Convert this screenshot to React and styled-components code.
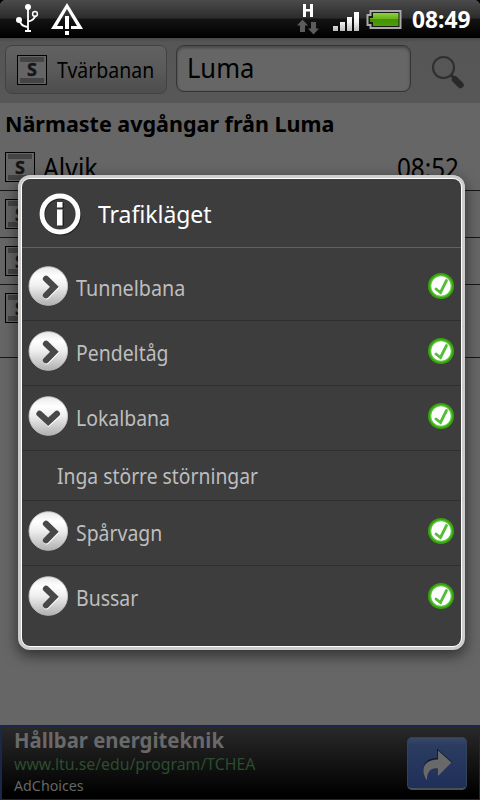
import React from 'react';
import styled, { createGlobalStyle } from 'styled-components';

const Global = createGlobalStyle`
  * { box-sizing: border-box; }
  body { margin: 0; background: #666; font-family: "Noto Sans", "Open Sans", sans-serif; }
`;

const Screen = styled.div`
  position: relative;
  width: 480px;
  height: 800px;
  overflow: hidden;
  display: flex;
  flex-direction: column;
  background: #666;
  color: #000;
`;

const Text = styled.span`
  display: block;
  flex: none;
  white-space: nowrap;
  font-size: ${p => p.$size}px;
  line-height: ${p => p.$line || 30}px;
  font-weight: ${p => (p.$bold ? 700 : 400)};
  color: ${p => p.$color || '#000'};
  transform: scaleX(${p => p.$stretch || 1});
  transform-origin: ${p => p.$origin || 'left'} center;
`;

const StatusBar = styled.header`
  height: 38px;
  flex: none;
  display: flex;
  justify-content: space-between;
  border-radius: 6px 6px 0 0;
  background: linear-gradient(#4b4b4b 0, #2c2c2c 18px, #141414 19px, #000 37px);
  box-shadow: 0 -6px 0 6px #000;
  z-index: 1;
`;

const StatusGroup = styled.div`
  display: flex;
  height: 38px;
`;

const Clock = styled.div`
  width: 74px;
  padding: 4px 0 0 6px;
`;

const Toolbar = styled.div`
  height: 65px;
  flex: none;
  display: flex;
  padding: 7px 5px 0;
  background: linear-gradient(#484848 0, #565656 4px, #575757 100%);
`;

const LineButton = styled.button`
  width: 162px;
  height: 49px;
  display: flex;
  align-items: center;
  padding: 0 0 0 11px;
  gap: 10px;
  border: 1px solid #424242;
  border-radius: 7px;
  background: linear-gradient(#616161, #5a5a5a 50%, #4d4d4d);
  font-family: inherit;
`;

const LineName = styled.span`
  padding-bottom: 2px;
`;

const StationField = styled.div`
  width: 235px;
  height: 47px;
  margin-left: 9px;
  padding: 3px 0 0 10px;
  border: 1px solid #353535;
  border-radius: 8px;
  background: #666;
  box-shadow: inset 0 2px 3px #484848, inset 0 0 1px #444;
`;

const SearchButton = styled.div`
  margin: 9px 0 0 20px;
  width: 36px;
  height: 36px;
`;

const Heading = styled.div`
  height: 41px;
  flex: none;
  padding: 6px 0 0 5px;
`;

const Departure = styled.div`
  height: ${p => p.$height}px;
  flex: none;
  display: flex;
  align-items: flex-start;
  gap: 8px;
  padding: 8px 21px 0 5px;
  border-bottom: 1px solid #171717;
`;

const Grow = styled.div`
  flex: 1;
`;

const Ad = styled.footer`
  height: 75px;
  flex: none;
  display: flex;
  justify-content: space-between;
  padding: 0 12px 0 12px;
  border: 1px solid #1b2748;
  border-left-width: 2px;
  border-top-width: 2px;
  background: linear-gradient(#292929, #000 95%);
`;

const AdCopy = styled.div`
  display: flex;
  flex-direction: column;
`;

const AdButton = styled.div`
  width: 60px;
  height: 53px;
  margin-top: 10px;
  border: 1px solid #35415b;
  border-bottom: 2px solid #4b5058;
  border-radius: 5px;
  background: linear-gradient(#3a4967 0, #2b3c61 7px, #1f2f59 100%);
`;

const Dialog = styled.section`
  position: absolute;
  left: 18px;
  top: 175px;
  width: 447px;
  height: 475px;
  border: 3px solid #ccc;
  border-radius: 12px;
  background: #fff;
  padding: 1px;
  box-shadow: 0 5px 14px 1px rgba(0, 0, 0, 0.5);
`;

const DialogBody = styled.div`
  height: 100%;
  border-radius: 8px;
  background: #3d3d3d;
`;

const DialogTitle = styled.div`
  height: 69px;
  display: flex;
  align-items: flex-start;
  gap: 16px;
  padding: 13px 0 0 16px;
  border-bottom: 1px solid #626262;
`;

const TitleText = styled.div`
  padding-top: 7px;
`;

const List = styled.div`
  padding-top: 8px;
`;

const Group = styled.div`
  height: 65px;
  display: flex;
  align-items: flex-start;
  padding: 10px 7px 0 6px;
  gap: 8px;
  border-bottom: ${p => (p.$last ? 0 : 1)}px solid #303030;
`;

const GroupName = styled.div`
  flex: 1;
  padding-top: 6px;
`;

const CheckSlot = styled.div`
  padding-top: 7px;
`;

const Detail = styled.div`
  height: 50px;
  padding: 9px 0 0 35px;
  border-bottom: 1px solid #303030;
`;

const Svg = styled.svg`
  display: block;
  flex: none;
`;

const SLogo = styled.div`
  width: 30px;
  height: 30px;
  flex: none;
  display: flex;
  flex-direction: column;
  align-items: center;
  justify-content: space-between;
  padding: 1px;
  border: 1.5px solid #000;
  background: #656565;
`;

const SBand = styled.div`
  width: 24px;
  height: 5px;
  background: #444;
`;

const SLetter = styled.div`
  font: 700 18px/15px "Noto Sans", sans-serif;
  color: #151515;
  -webkit-text-stroke: 0.4px #151515;
`;

const LineLogo = () => (
  <SLogo>
    <SBand />
    <SLetter>S</SLetter>
    <SBand />
  </SLogo>
);

const StatusLeft = () => (
  <Svg width="90" height="38" viewBox="0 0 90 38">
    <g fill="none" stroke="#fff" strokeWidth="1.8">
      <path d="M28 6v25M19.500 20q1 6 8 7M28 21.500q6-1 7.500-6" />
      <circle cx="35" cy="14" r="2.400" strokeWidth="1.500" />
    </g>
    <circle cx="28" cy="7" r="3" fill="#fff" />
    <circle cx="19" cy="20" r="3" fill="#fff" />
    <rect x="25" y="30" width="6" height="2" fill="#fff" />
    <path d="M67 3l16 26H71v-3h6L67 9 57 26h6v3H51z" fill="#fff" />
    <rect x="65" y="16" width="4" height="13" fill="#fff" />
    <rect x="65" y="31" width="4" height="4" fill="#fff" />
  </Svg>
);

const StatusRight = () => (
  <Svg width="110" height="38" viewBox="296 0 110 38">
    <defs>
      <linearGradient id="bars" x1="0" y1="12" x2="0" y2="31" gradientUnits="userSpaceOnUse">
        <stop offset="0" stopColor="#fff" />
        <stop offset=".5" stopColor="#f2f2f2" />
        <stop offset="1" stopColor="#bbb" />
      </linearGradient>
      <linearGradient id="charge" x1="0" y1="0" x2="0" y2="1">
        <stop offset="0" stopColor="#8ed23e" />
        <stop offset=".48" stopColor="#66ae1b" />
        <stop offset=".5" stopColor="#429500" />
        <stop offset="1" stopColor="#4d9d05" />
      </linearGradient>
    </defs>
    <path d="M303 4h3v5h4V4h3v13h-3v-5.500h-4V17h-3z" fill="#fff" />
    <path d="M302.500 19.500l5.500 6h-3V32h-5v-6.500h-3zM313.500 34.500l-5.500-6h3V22h5v6.500h3z" fill="#5c5c5c" />
    <path d="M333 26h5v5h-5zM340 22h5v9h-5zM347 17h5v14h-5zM354 12h5v19h-5z" fill="url(#bars)" />
    <path d="M370.500 11h30v17h-30v-3h-3v-10h3z" fill="#181818" stroke="#aaa" strokeWidth="2" />
    <path d="M373 13h25.500v13H373v-4h-3v-4h3z" fill="url(#charge)" />
  </Svg>
);

const Magnifier = () => (
  <Svg width="36" height="36" viewBox="431 54 36 36">
    <circle cx="443.500" cy="67.500" r="10.500" fill="none" stroke="#303030" strokeWidth="2.200" />
    <path d="M451 75l3 3" stroke="#2b2b2b" strokeWidth="3" />
    <path d="M455 79.500l5.500 5.500" stroke="#292929" strokeWidth="6.500" strokeLinecap="round" />
  </Svg>
);

const InfoIcon = () => (
  <Svg width="44" height="44" viewBox="38 192 44 44">
    <circle cx="60.800" cy="215" r="18" fill="none" stroke="#252525" strokeWidth="5" />
    <circle cx="60" cy="214" r="18" fill="none" stroke="#fff" strokeWidth="4.800" />
    <path d="M58 202.500h6v6h-6zM58 210.500h6v16h-6z" fill="#222" />
    <path d="M57 202h5.500v5.500H57zM57 209.500h5.500v16H57z" fill="#fff" />
  </Svg>
);

const Chevron = ({ open }) => (
  <Svg width="40" height="40" viewBox="28 266 40 40">
    <defs>
      <linearGradient id="disc" x1="0" y1="0" x2="0" y2="1">
        <stop offset="0" stopColor="#e8e8e8" />
        <stop offset=".25" stopColor="#fff" />
        <stop offset=".5" stopColor="#eee" />
        <stop offset="1" stopColor="#b0b0b0" />
      </linearGradient>
    </defs>
    <circle cx="48.300" cy="286" r="19.300" fill="url(#disc)" stroke="#c4c4c4" strokeWidth="0.900" />
    <g fill="none" strokeWidth="6.200" strokeLinecap="round">
      <path d={open ? 'M40 284.800l8.700 8 8.700-8' : 'M46.500 279.800l8.300 8-8.300 8.500'} stroke="#fff" />
      <path d={open ? 'M39.500 283.800l8.700 8 8.700-8' : 'M46 278.800l8.300 8-8.300 8.500'} stroke="#484848" />
    </g>
  </Svg>
);

const Check = () => (
  <Svg width="26" height="26" viewBox="0 0 26 26">
    <circle cx="13" cy="13" r="13" fill="#35a709" />
    <circle cx="13" cy="13" r="11" fill="#62c543" />
    <circle cx="13" cy="13" r="9.800" fill="#fff" />
    <path d="M8 16l4.500 3.500L18.500 7.500" fill="none" stroke="#55bd37" strokeWidth="2.800" strokeLinecap="round" />
  </Svg>
);

const ShareArrow = () => (
  <Svg width="58" height="50" viewBox="408 738 58 50">
    <path d="M437 748.500l15 13.500-14 13v-7c-7-1-11 3-11 12-8-13-2-22 10-22z" fill="#131a2b" />
    <path d="M438 750.500l13.500 12-13.500 13.500v-7.500c-7-1-11 3-11 12-8-12-2-21 11-21z" fill="#696969" />
  </Svg>
);

const Item = ({ name, stretch, open, last }) => (
  <Group $last={last}>
    <Chevron open={open} />
    <GroupName>
      <Text $size={22} $color="#bebebe" $stretch={stretch}>{name}</Text>
    </GroupName>
    <CheckSlot><Check /></CheckSlot>
  </Group>
);

export default function App() {
  return (
    <>
      <Global />
      <Screen>
        <StatusBar>
          <StatusLeft />
          <StatusGroup>
            <StatusRight />
            <Clock>
              <Text $size={23} $bold $color="#fff" $stretch={0.99}>08:49</Text>
            </Clock>
          </StatusGroup>
        </StatusBar>
        <Toolbar>
          <LineButton>
            <LineLogo />
            <LineName>
              <Text $size={22} $stretch={0.885}>Tvärbanan</Text>
            </LineName>
          </LineButton>
          <StationField>
            <Text $size={27} $line={38} $stretch={0.945}>Luma</Text>
          </StationField>
          <SearchButton><Magnifier /></SearchButton>
        </Toolbar>
        <Heading>
          <Text $size={21.500} $bold $stretch={1}>Närmaste avgångar från Luma</Text>
        </Heading>
        <Departure $height={47}>
          <LineLogo />
          <Text $size={27} $line={32} $stretch={0.92}>Alvik</Text>
          <Grow />
          <Text $size={27} $line={32} $stretch={0.9} $origin="right">08:52</Text>
        </Departure>
        <Departure $height={47}><LineLogo /></Departure>
        <Departure $height={47}><LineLogo /></Departure>
        <Departure $height={73}><LineLogo /></Departure>
        <Grow />
        <Ad>
          <AdCopy>
            <Text $size={21} $line={26} $bold $color="#696969" $stretch={0.968}>Hållbar energiteknik</Text>
            <Text $size={16.500} $line={22} $color="#2c4d2e" $stretch={0.958}>www.ltu.se/edu/program/TCHEA</Text>
            <Text $size={15} $line={20} $color="#666" $stretch={0.95}>AdChoices</Text>
          </AdCopy>
          <AdButton><ShareArrow /></AdButton>
        </Ad>
        <Dialog>
          <DialogBody>
            <DialogTitle>
              <InfoIcon />
              <TitleText>
                <Text $size={24} $color="#fff" $stretch={0.955}>Trafikläget</Text>
              </TitleText>
            </DialogTitle>
            <List>
              <Item name="Tunnelbana" stretch={0.897} />
              <Item name="Pendeltåg" stretch={0.883} />
              <Item name="Lokalbana" stretch={0.883} open />
              <Detail>
                <Text $size={22} $color="#bebebe" $stretch={0.878}>Inga större störningar</Text>
              </Detail>
              <Item name="Spårvagn" stretch={0.883} />
              <Item name="Bussar" stretch={0.885} last />
            </List>
          </DialogBody>
        </Dialog>
      </Screen>
    </>
  );
}
